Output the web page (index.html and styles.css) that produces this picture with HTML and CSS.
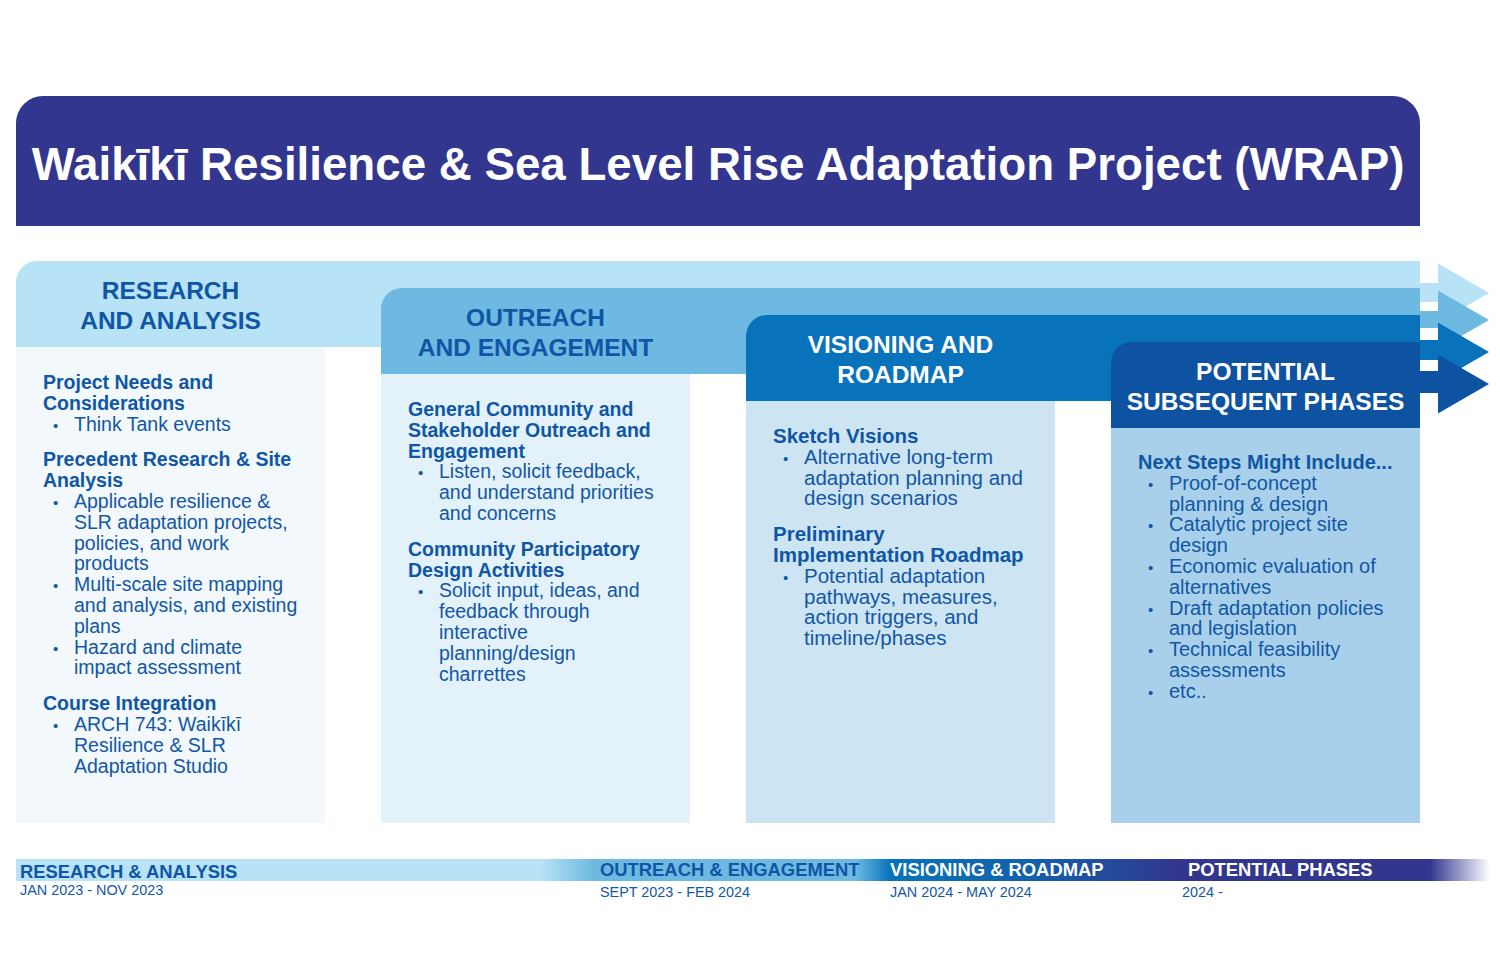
FILE: index.html
```html
<!DOCTYPE html>
<html lang="en">
<head>
<meta charset="utf-8">
<title>WRAP</title>
<link rel="stylesheet" href="styles.css">
</head>
<body>
<div class="page">
  <header class="banner">
    <h1>Waikīkī Resilience &amp; Sea Level Rise Adaptation Project (WRAP)</h1>
  </header>

  <section class="stages">
    <div class="band band-1"><h2>RESEARCH<br>AND ANALYSIS</h2></div>
    <div class="band band-2"><h2>OUTREACH<br>AND ENGAGEMENT</h2></div>
    <div class="band band-3"><h2>VISIONING AND<br>ROADMAP</h2></div>
    <div class="band band-4"><h2>POTENTIAL<br>SUBSEQUENT PHASES</h2></div>

    <svg class="arrows" viewBox="0 0 70 167" width="70" height="167" aria-hidden="true">
      <rect x="0" y="22" width="20" height="19" fill="#b8e2f6"/>
      <polygon points="18,2.5 69,32 18,61.5" fill="#b8e2f6"/>
      <rect x="0" y="50" width="20" height="17" fill="#6db9e2"/>
      <polygon points="18,29.5 69,59 18,88.5" fill="#6db9e2"/>
      <rect x="0" y="79" width="20" height="20" fill="#0873ba"/>
      <polygon points="18,61.5 69,91 18,120.5" fill="#0873ba"/>
      <rect x="0" y="110" width="20" height="22" fill="#0e52a2"/>
      <polygon points="18,93.5 69,123 18,152.5" fill="#0e52a2"/>
    </svg>

    <div class="panel panel-1">
      <div class="item">
        <h3>Project Needs and<br>Considerations</h3>
        <ul><li>Think Tank events</li></ul>
      </div>
      <div class="item">
        <h3>Precedent Research &amp; Site<br>Analysis</h3>
        <ul>
          <li>Applicable resilience &amp;<br>SLR adaptation projects,<br>policies, and work<br>products</li>
          <li>Multi-scale site mapping<br>and analysis, and existing<br>plans</li>
          <li>Hazard and climate<br>impact assessment</li>
        </ul>
      </div>
      <div class="item">
        <h3>Course Integration</h3>
        <ul><li>ARCH 743: Waikīkī<br>Resilience &amp; SLR<br>Adaptation Studio</li></ul>
      </div>
    </div>

    <div class="panel panel-2">
      <div class="item">
        <h3>General Community and<br>Stakeholder Outreach and<br>Engagement</h3>
        <ul><li>Listen, solicit feedback,<br>and understand priorities<br>and concerns</li></ul>
      </div>
      <div class="item">
        <h3>Community Participatory<br>Design Activities</h3>
        <ul><li>Solicit input, ideas, and<br>feedback through<br>interactive<br>planning/design<br>charrettes</li></ul>
      </div>
    </div>

    <div class="panel panel-3">
      <div class="item">
        <h3>Sketch Visions</h3>
        <ul><li>Alternative long-term<br>adaptation planning and<br>design scenarios</li></ul>
      </div>
      <div class="item">
        <h3>Preliminary<br>Implementation Roadmap</h3>
        <ul><li>Potential adaptation<br>pathways, measures,<br>action triggers, and<br>timeline/phases</li></ul>
      </div>
    </div>

    <div class="panel panel-4">
      <div class="item">
        <h3>Next Steps Might Include...</h3>
        <ul>
          <li>Proof-of-concept<br>planning &amp; design</li>
          <li>Catalytic project site<br>design</li>
          <li>Economic evaluation of<br>alternatives</li>
          <li>Draft adaptation policies<br>and legislation</li>
          <li>Technical feasibility<br>assessments</li>
          <li>etc..</li>
        </ul>
      </div>
    </div>
  </section>

  <section class="timeline">
    <div class="bar">
      <span class="phase phase-dark phase-low">RESEARCH &amp; ANALYSIS</span>
      <span class="phase phase-dark">OUTREACH &amp; ENGAGEMENT</span>
      <span class="phase phase-light">VISIONING &amp; ROADMAP</span>
      <span class="phase phase-light phase-last">POTENTIAL PHASES</span>
    </div>
    <div class="dates">
      <span class="date">JAN 2023 - NOV 2023</span>
      <span class="date date-down">SEPT 2023 - FEB 2024</span>
      <span class="date date-down">JAN 2024 - MAY 2024</span>
      <span class="date date-down">2024 -</span>
    </div>
  </section>
</div>
</body>
</html>
```

FILE: styles.css
```css
* { box-sizing: border-box; }

html, body {
  margin: 0;
  padding: 0;
  background: #ffffff;
}

body {
  font-family: "Liberation Sans", Arial, Helvetica, sans-serif;
  color: #1257a5;
}

.page {
  padding: 96px 0 0 16px;
  width: 1500px;
}

/* Title banner */
.banner {
  width: 1404px;
  height: 130px;
  background: #32368f;
  border-radius: 27px 27px 0 0;
  padding-top: 46px;
}

.banner h1 {
  margin: 0;
  color: #ffffff;
  font-size: 45.7px;
  line-height: 45px;
  font-weight: 700;
  text-align: center;
  white-space: nowrap;
}

/* Stage diagram */
.stages {
  margin-top: 35px;
  display: grid;
  grid-template-columns: 309px 56px 309px 56px 309px 56px 309px 70px;
  grid-template-rows: 27px 27px 27px 5px 27px 27px 27px 395px;
}

.band {
  display: flex;
  align-items: center;
  padding-top: 3px;
  border-top-left-radius: 21px;
}

.band h2 {
  margin: 0;
  width: 309px;
  flex: none;
  text-align: center;
  font-size: 24.5px;
  line-height: 30px;
  font-weight: 700;
  white-space: nowrap;
}

.band-1 { grid-column: 1 / 8; grid-row: 1 / 5; background: #b8e2f6; }
.band-2 { grid-column: 3 / 8; grid-row: 2 / 6; background: #6db9e2; }
.band-3 { grid-column: 5 / 8; grid-row: 3 / 7; background: #0873ba; }
.band-4 { grid-column: 7 / 8; grid-row: 4 / 8; background: #0e52a2; }

.band-1 h2, .band-2 h2 { color: #0f57a4; }
.band-3 h2, .band-4 h2 { color: #ffffff; }

.arrows {
  grid-column: 8 / 9;
  grid-row: 1 / 8;
  display: block;
}

.panel {
  padding: 25px 4px 0 27px;
  font-size: 19.5px;
}

.panel-1 { grid-column: 1 / 2; grid-row: 5 / 9; background: #f2f8fc; }
.panel-2 { grid-column: 3 / 4; grid-row: 6 / 9; background: #e3f1fa; }
.panel-3 { grid-column: 5 / 6; grid-row: 7 / 9; background: #cde4f3; font-size: 20.5px; }
.panel-4 { grid-column: 7 / 8; grid-row: 8 / 9; background: #a8d0ea; font-size: 20px; padding-top: 24px; }

.item + .item { margin-top: 15px; }

.item h3 {
  margin: 0;
  font-size: 1em;
  line-height: 20.8px;
  font-weight: 700;
  color: #0f57a4;
  white-space: nowrap;
}

.item ul {
  margin: 0;
  padding: 0;
  list-style: none;
}

.item li {
  font-size: 1em;
  line-height: 20.8px;
  padding-left: 31px;
  text-indent: -21px;
  white-space: nowrap;
  color: #1257a5;
}

.item li::before {
  content: "•";
  display: inline-block;
  width: 21px;
  text-indent: 0;
  font-size: 15px;
  line-height: 1;
  vertical-align: baseline;
}

/* Timeline */
.timeline {
  margin-top: 36px;
  width: 1474px;
}

.bar,
.dates {
  display: grid;
  grid-template-columns: 580px 290px 292px 1fr;
  padding-left: 4px;
}

.bar {
  height: 22px;
  background: linear-gradient(to right,
    #b8e2f6 0px,
    #b8e2f6 524px,
    #6db9e2 578px,
    #6db9e2 840px,
    #0873ba 874px,
    #1262ab 1010px,
    #32368f 1164px,
    #32368f 1414px,
    #ffffff 1474px);
}

.phase {
  font-size: 18.4px;
  line-height: 22px;
  font-weight: 700;
  white-space: nowrap;
}

.phase-low { position: relative; top: 2px; }
.phase-dark { color: #0f57a4; }
.phase-light { color: #ffffff; }
.phase-last { padding-left: 6px; }

.date {
  font-size: 14.4px;
  line-height: 18px;
  color: #1257a5;
  white-space: nowrap;
}

.date-down { padding-top: 2px; }
```
